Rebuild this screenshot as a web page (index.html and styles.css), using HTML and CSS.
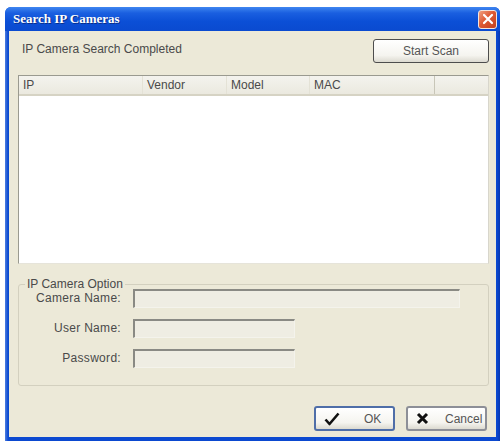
FILE: index.html
```html
<!doctype html>
<html lang="en">
<head>
    <meta charset="UTF-8">
    <title>Search IP Cameras</title>
    <link rel="stylesheet" href="styles.css">
</head>
<body>
    <div class="window">
        <div class="titlebar">
            <span class="titlebar__text">Search IP Cameras</span>
            <span class="titlebar__close">
                <svg width="12" height="12" viewBox="0 0 12 12"><path d="M2 2 L10 10 M10 2 L2 10" stroke="#fff" stroke-width="2.2" stroke-linecap="round"/></svg>
            </span>
        </div>

        <div class="window__body">
            <div class="status-row">
                <span class="status-row__text">IP Camera Search Completed</span>
                <button type="button" class="btn btn--scan">Start Scan</button>
            </div>

            <div class="listview">
                <div class="listview__header">
                    <span class="listview__col">IP</span>
                    <span class="listview__col">Vendor</span>
                    <span class="listview__col">Model</span>
                    <span class="listview__col">MAC</span>
                    <span class="listview__col listview__col--fill"></span>
                </div>
                <div class="listview__rows"></div>
            </div>

            <fieldset class="options">
                <legend>IP Camera Option</legend>
                <div class="options__rows">
                    <div class="options__row">
                        <label>Camera Name:</label>
                        <span class="field field--wide"></span>
                    </div>
                    <div class="options__row">
                        <label>User Name:</label>
                        <span class="field"></span>
                    </div>
                    <div class="options__row">
                        <label>Password:</label>
                        <span class="field"></span>
                    </div>
                </div>
            </fieldset>

            <div class="actions">
                <button type="button" class="btn btn--action btn--default">
                    <svg width="16" height="14" viewBox="0 0 16 14"><path d="M1.5 7.5 L5.5 12 L14.5 1.5" fill="none" stroke="#111" stroke-width="2.6" stroke-linejoin="round"/></svg>
                    <span>OK</span>
                </button>
                <button type="button" class="btn btn--action">
                    <svg width="13" height="13" viewBox="0 0 13 13"><path d="M2 2 L11 11 M11 2 L2 11" stroke="#111" stroke-width="3"/></svg>
                    <span>Cancel</span>
                </button>
            </div>
        </div>
    </div>
</body>
</html>
```

FILE: styles.css
```css
body {
    margin: 0;
    background-color: #ffffff;
    font-family: "Liberation Sans", Arial, sans-serif;
    font-size: 12px;
    color: #4a4a4a;
}

.window {
    width: 495px;
    height: 434px;
    margin: 7px 0 0 5px;
    display: flex;
    flex-direction: column;
    box-sizing: border-box;
    background-color: #0a4cd4;
    border-radius: 6px 6px 0 0;
    padding: 0 4px 4px 4px;
    background-image: linear-gradient(to right, #4f7fe0 0, #0b49d0 3px, #0b49d0 calc(100% - 3px), #0837b0 100%);
}

.titlebar {
    height: 24px;
    display: flex;
    align-items: center;
    justify-content: space-between;
    margin: 0 -4px;
    padding: 0 3px 0 8px;
    border-radius: 6px 6px 0 0;
    background: linear-gradient(to bottom, #3f86f0 0, #1a5fe0 25%, #0b4fd6 60%, #0a4ad0 100%);
}

.titlebar__text {
    font-family: "Liberation Serif", "Times New Roman", serif;
    font-weight: bold;
    font-size: 13px;
    color: #ffffff;
    text-shadow: 1px 1px 0 #0a2f8a;
}

.titlebar__close {
    width: 19px;
    height: 19px;
    box-sizing: border-box;
    display: flex;
    align-items: center;
    justify-content: center;
    border: 1px solid #f4e4dc;
    border-radius: 3px;
    background: linear-gradient(135deg, #f0a080 0, #de5a34 45%, #c2401e 100%);
}

.window__body {
    flex: 1;
    display: flex;
    flex-direction: column;
    background-color: #ece9d8;
    padding: 8px 7px 0 9px;
}

.status-row {
    display: flex;
    justify-content: space-between;
    align-items: center;
    padding-left: 4px;
}

.status-row__text {
    margin-top: -4px;
}

.btn {
    font-family: "Liberation Sans", Arial, sans-serif;
    font-size: 12px;
    color: #555555;
    background: linear-gradient(to bottom, #ffffff 0, #f5f4ef 70%, #dcdad0 100%);
    border: 1px solid #4d4d4d;
    border-radius: 3px;
    padding: 0;
}

.btn--scan {
    width: 116px;
    height: 24px;
}

.listview {
    height: 187px;
    margin-top: 12px;
    display: flex;
    flex-direction: column;
    background-color: #ffffff;
    border: 1px solid #9a9a90;
    border-right-color: #d8d6cc;
    border-bottom-color: #e6e4da;
}

.listview__header {
    height: 18px;
    display: grid;
    grid-template-columns: 124px 84px 83px 125px 1fr;
    background: linear-gradient(to bottom, #f4f3ee 0, #ebe9df 100%);
    border-bottom: 2px solid #d6d3c4;
}

.listview__col {
    display: flex;
    align-items: center;
    padding-left: 4px;
    border-right: 1px solid #e4e2d6;
}

.listview__col:nth-child(4) {
    border-right-color: #c8c6b8;
}

.listview__col--fill {
    border-right: none;
}

.listview__rows {
    flex: 1;
}

.options {
    margin: 13px 0 0 0;
    padding: 0;
    height: 109px;
    box-sizing: border-box;
    border: 1px solid #d3d0bf;
    border-radius: 3px;
}

.options legend {
    padding: 0 2px;
    margin-left: 6px;
}

.options__rows {
    margin-top: -8px;
}

.options__row {
    display: flex;
    align-items: center;
    height: 30px;
}

.options__row label {
    width: 102px;
    text-align: right;
    margin-right: 12px;
    letter-spacing: 0.3px;
}

.field {
    width: 162px;
    height: 19px;
    box-sizing: border-box;
    background-color: #efede3;
    border-top: 2px solid #8a8a84;
    border-left: 2px solid #8a8a84;
    border-right: 1px solid #f4f3ec;
    border-bottom: 1px solid #f4f3ec;
}

.field--wide {
    width: 327px;
}

.actions {
    display: flex;
    justify-content: flex-end;
    gap: 11px;
    margin-top: 20px;
    padding-right: 2px;
}

.btn--action {
    width: 81px;
    height: 25px;
    display: flex;
    align-items: center;
    gap: 16px;
    padding-left: 8px;
    border: 2px solid #8d8f97;
}

.btn--default {
    border-color: #4f6ea8;
    gap: 24px;
}
```
